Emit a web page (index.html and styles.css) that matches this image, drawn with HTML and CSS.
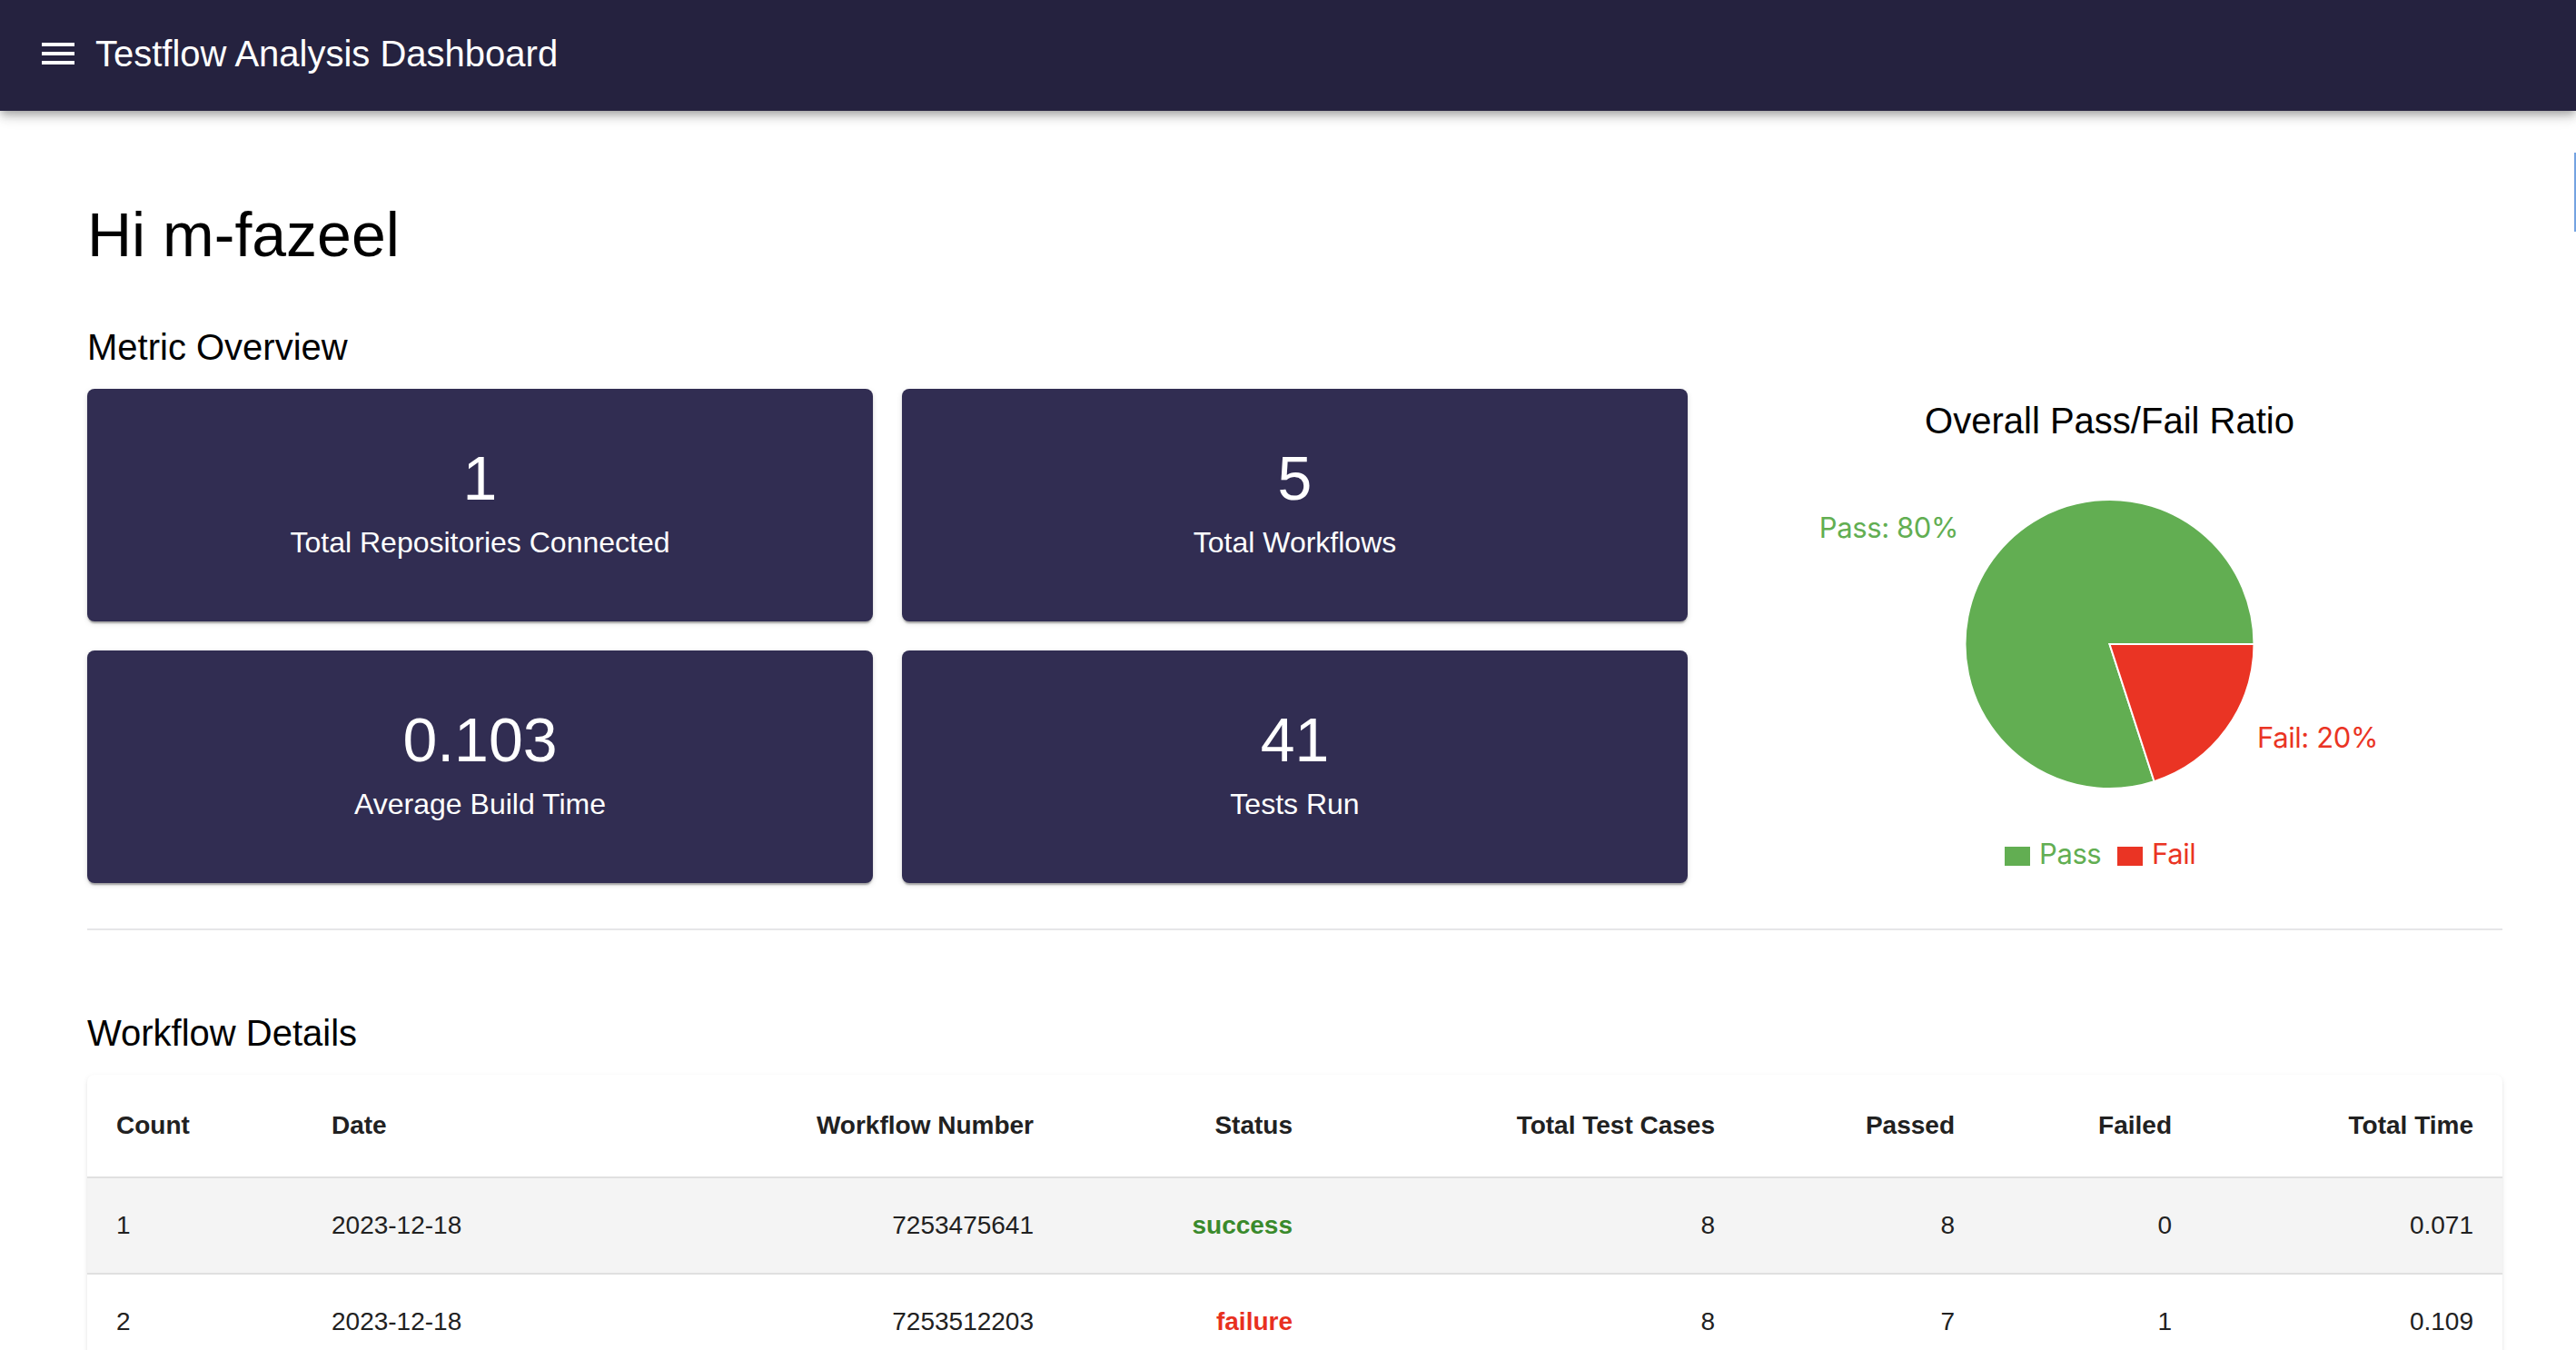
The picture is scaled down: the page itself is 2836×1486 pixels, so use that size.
FILE: index.html
```html
<!DOCTYPE html>
<html lang="en">
<head>
<meta charset="utf-8">
<title>Testflow Analysis Dashboard</title>
<link rel="stylesheet" href="styles.css">
</head>
<body>
<header class="appbar">
  <div class="toolbar">
    <button class="menu-btn" aria-label="menu">
      <svg class="menu-icon" viewBox="0 0 24 24" width="48" height="48"><path fill="#fff" d="M3 18h18v-2H3v2zm0-5h18v-2H3v2zm0-7v2h18V6H3z"/></svg>
    </button>
    <h1 class="app-title">Testflow Analysis Dashboard</h1>
  </div>
</header>
<div class="edge-mark"></div>
<main class="content">
  <h2 class="greeting">Hi m-fazeel</h2>
  <h3 class="section-title overview-title">Metric Overview</h3>
  <section class="overview">
    <div class="card"><div class="card-value">1</div><div class="card-label">Total Repositories Connected</div></div>
    <div class="card"><div class="card-value">5</div><div class="card-label">Total Workflows</div></div>
    <div class="chart">
      <div class="chart-title">Overall Pass/Fail Ratio</div>
      <svg class="chart-svg" viewBox="0 0 865 480" width="865" height="480">
        <path d="M432.5 222 L591.5 222 A159 159 0 1 0 481.6 373.2 Z" fill="#62ae52" stroke="#fff" stroke-width="2"/>
        <path d="M432.5 222 L591.5 222 A159 159 0 0 1 481.6 373.2 Z" fill="#ea3424" stroke="#fff" stroke-width="2"/>
        <text class="chart-text" x="266" y="105" text-anchor="end" fill="#62ae52">Pass: 80%</text>
        <text class="chart-text" x="595" y="336" text-anchor="start" fill="#ea3424">Fail: 20%</text>
        <rect x="317" y="445" width="28" height="21" fill="#62ae52"/>
        <text class="chart-text" x="355" y="464" fill="#62ae52">Pass</text>
        <rect x="441" y="445" width="28" height="21" fill="#ea3424"/>
        <text class="chart-text" x="479" y="464" fill="#ea3424">Fail</text>
      </svg>
    </div>
    <div class="card"><div class="card-value">0.103</div><div class="card-label">Average Build Time</div></div>
    <div class="card"><div class="card-value">41</div><div class="card-label">Tests Run</div></div>
  </section>
  <hr class="divider">
  <h3 class="section-title details-title">Workflow Details</h3>
  <div class="table-paper">
    <table class="wf-table">
      <colgroup>
        <col class="c-count"><col class="c-date"><col class="c-num"><col class="c-status"><col class="c-total"><col class="c-passed"><col class="c-failed"><col class="c-time">
      </colgroup>
      <thead>
        <tr><th class="left">Count</th><th class="left">Date</th><th>Workflow Number</th><th>Status</th><th>Total Test Cases</th><th>Passed</th><th>Failed</th><th>Total Time</th></tr>
      </thead>
      <tbody>
        <tr class="striped"><td class="left">1</td><td class="left">2023-12-18</td><td>7253475641</td><td class="status success">success</td><td>8</td><td>8</td><td>0</td><td>0.071</td></tr>
        <tr><td class="left">2</td><td class="left">2023-12-18</td><td>7253512203</td><td class="status failure">failure</td><td>8</td><td>7</td><td>1</td><td>0.109</td></tr>
      </tbody>
    </table>
  </div>
</main>
</body>
</html>
```
FILE: styles.css
```css
html, body {
  margin: 0;
  padding: 0;
  background: #ffffff;
  font-family: "Liberation Sans", Arial, Helvetica, sans-serif;
  color: #111111;
}

.appbar {
  height: 122px;
  background: #25223f;
  box-shadow: 0 4px 8px -2px rgba(0,0,0,0.25), 0 8px 10px 0 rgba(0,0,0,0.12), 0 2px 20px 0 rgba(0,0,0,0.1);
  position: relative;
  z-index: 2;
}

.toolbar {
  height: 117px;
  display: flex;
  align-items: center;
  padding: 0 48px;
}

.menu-btn {
  margin-left: -24px;
  padding: 16px;
  background: none;
  border: 0;
  display: flex;
  cursor: pointer;
}

.menu-icon {
  display: block;
  width: 48px;
  height: 48px;
}

.app-title {
  margin: 0 0 0 1px;
  font-size: 40px;
  line-height: 64px;
  font-weight: 400;
  color: #ffffff;
}

.edge-mark {
  position: fixed;
  right: 0;
  top: 168px;
  width: 2px;
  height: 87px;
  background: #74a3e2;
}

.content {
  padding: 94px 81px 40px 96px;
}

.greeting {
  margin: 0;
  font-size: 68px;
  line-height: 84px;
  font-weight: 400;
  color: #000000;
}

.section-title {
  margin: 0;
  font-size: 40px;
  line-height: 64px;
  font-weight: 400;
  color: #000000;
}

.overview-title {
  margin-top: 50px;
  margin-bottom: 14px;
}

.overview {
  display: grid;
  grid-template-columns: repeat(3, 1fr);
  grid-template-rows: 256px 256px;
  column-gap: 32px;
  row-gap: 32px;
}

.card {
  background: #312d52;
  border-radius: 8px;
  box-shadow: 0 4px 2px -2px rgba(0,0,0,0.2), 0 2px 2px 0 rgba(0,0,0,0.14), 0 2px 6px 0 rgba(0,0,0,0.12);
  color: #ffffff;
  text-align: center;
  padding-top: 56px;
  box-sizing: border-box;
}

.card-value {
  font-size: 68px;
  line-height: 84px;
}

.card-label {
  margin-top: 5px;
  font-size: 32px;
  line-height: 48px;
}

.chart {
  grid-column: 3;
  grid-row: 1 / span 2;
  display: flex;
  flex-direction: column;
  align-items: center;
}

.chart-title {
  margin-top: 11px;
  font-size: 40px;
  line-height: 48px;
  color: #000000;
  text-align: center;
  flex-shrink: 0;
}

.chart-svg {
  display: block;
  flex-shrink: 0;
}

.chart-text {
  font-family: Inter, "Noto Sans", sans-serif;
  font-size: 31px;
  letter-spacing: -0.4px;
}

.divider {
  margin: 50px 0 0 0;
  border: 0;
  height: 2px;
  background: #e6e6e8;
}

.details-title {
  margin-top: 81px;
  margin-bottom: 14px;
}

.table-paper {
  background: #ffffff;
  border-radius: 8px;
  box-shadow: 0 4px 2px -2px rgba(0,0,0,0.12), 0 2px 2px 0 rgba(0,0,0,0.08), 0 2px 6px 0 rgba(0,0,0,0.08);
  overflow: hidden;
}

.wf-table {
  width: 100%;
  border-collapse: collapse;
  table-layout: fixed;
  font-size: 28px;
  color: #212121;
}

.c-count { width: 237px; }
.c-date { width: 387px; }
.c-num { width: 450px; }
.c-status { width: 285px; }
.c-total { width: 465px; }
.c-passed { width: 264px; }
.c-failed { width: 239px; }

.wf-table th,
.wf-table td {
  padding: 32px;
  text-align: right;
  border-bottom: 2px solid #e0e0e0;
  white-space: nowrap;
}

.wf-table th {
  font-weight: 700;
  line-height: 48px;
}

.wf-table td {
  font-weight: 400;
  line-height: 40px;
}

.wf-table .left {
  text-align: left;
}

.striped {
  background: #f4f4f4;
}

.status {
  font-weight: 700 !important;
}

.success {
  color: #3a8a2c;
}

.failure {
  color: #e8301f;
}
```
